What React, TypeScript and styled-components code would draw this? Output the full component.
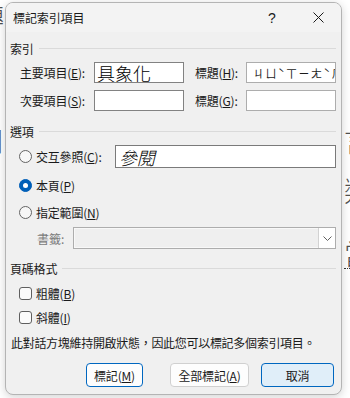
import React from "react";
import styled, { createGlobalStyle } from "styled-components";

const GlobalStyle = createGlobalStyle`
  html, body { margin: 0; padding: 0; background: #fff; }
  body {
    font-family: "Noto Sans CJK TC", "Noto Sans", sans-serif;
    font-size: 12px;
    color: #1a1a1a;
  }
  #root { width: 350px; height: 398px; }
`;

const Page = styled.div`
  position: relative;
  width: 350px;
  height: 398px;
  overflow: hidden;
  background: #fff;
`;

/* document behind the dialog */
const Backdrop = styled.div`
  display: flex;
  flex-direction: column;
  margin: 0 -22px 0 -24px;
`;

const BackRow = styled.div<{ $top: number }>`
  display: flex;
  justify-content: space-between;
  margin-top: ${(p) => p.$top}px;
  height: 30px;
  font-size: 28px;
  line-height: 30px;
  font-weight: 300;
  color: #505050;
`;

const Glyph = styled.span<{ $dotted?: boolean }>`
  display: block;
  width: 28px;
  height: 30px;
  ${(p) => (p.$dotted ? "border-bottom: 1px dotted #333;" : "")}
`;

/* dialog */
const Dialog = styled.div`
  position: absolute;
  left: 5px;
  top: 2px;
  width: 337px;
  height: 393px;
  box-sizing: border-box;
  border: 1px solid #b4b4b4;
  border-radius: 8px;
  background: #f0f0f0;
  box-shadow: 0 2px 10px rgba(0, 0, 0, 0.18);
  overflow: hidden;
  display: flex;
  flex-direction: column;
`;

const TitleBar = styled.div`
  height: 29px;
  display: flex;
  align-items: center;
  background: #f3f3f3;
`;

const Title = styled.div`
  flex: 1;
  padding-left: 7px;
  font-size: 12px;
  letter-spacing: -0.1px;
  color: #1a1a1a;
`;

const TitleButton = styled.div`
  width: 46px;
  height: 29px;
  display: flex;
  align-items: center;
  justify-content: center;
  font-family: "Liberation Sans", sans-serif;
  font-size: 14px;
  color: #1a1a1a;
`;

const Body = styled.div`
  flex: 1;
  display: flex;
  flex-direction: column;
  padding: 0 5px 7px 4px;
`;

const SectionHeader = styled.div<{ $top: number }>`
  display: flex;
  align-items: center;
  gap: 5px;
  height: 16px;
  margin-top: ${(p) => p.$top}px;
  letter-spacing: -0.2px;
  white-space: nowrap;
  &::after {
    content: "";
    flex: 1;
    height: 1px;
    background: #dadada;
  }
`;

const FieldGrid = styled.div`
  display: grid;
  grid-template-columns: 74px 90px 62px 90px;
  grid-auto-rows: 21px;
  row-gap: 7px;
  align-items: center;
  padding-left: 10px;
  margin-top: 6px;
`;

const FieldLabel = styled.span<{ $indent?: number }>`
  white-space: nowrap;
  letter-spacing: -0.2px;
  padding-left: ${(p) => p.$indent ?? 0}px;
`;

const TextBox = styled.div<{ $border: string; $width?: number; $height?: number }>`
  box-sizing: border-box;
  height: ${(p) => p.$height ?? 21}px;
  ${(p) => (p.$width ? `width: ${p.$width}px; margin-left: auto;` : "")}
  border: 1px solid ${(p) => p.$border};
  background: #fff;
  display: flex;
  align-items: center;
  padding-left: 2px;
  overflow: hidden;
  white-space: nowrap;
`;

const BigText = styled.span<{ $italic?: boolean }>`
  font-size: 18px;
  line-height: 20px;
  font-weight: 300;
  color: #000;
  font-style: ${(p) => (p.$italic ? "italic" : "normal")};
  ${(p) => (p.$italic ? "padding-left: 1px;" : "")}
`;

const Phonetic = styled.span`
  font-size: 11px;
  letter-spacing: 1.5px;
  padding-left: 4px;
  color: #1a1a1a;
`;

const OptionRow = styled.div<{ $top: number; $height: number }>`
  display: flex;
  align-items: center;
  gap: 4px;
  height: ${(p) => p.$height}px;
  margin-top: ${(p) => p.$top}px;
  padding-left: 9px;
  white-space: nowrap;
  letter-spacing: -0.2px;
`;

const Radio = styled.span<{ $checked?: boolean }>`
  box-sizing: border-box;
  width: 13px;
  height: 13px;
  border-radius: 50%;
  flex: none;
  display: flex;
  align-items: center;
  justify-content: center;
  border: 1px solid ${(p) => (p.$checked ? "#005fb8" : "#646464")};
  background: ${(p) => (p.$checked ? "#005fb8" : "#f7f7f7")};
  &::after {
    content: "";
    display: ${(p) => (p.$checked ? "block" : "none")};
    width: 5px;
    height: 5px;
    border-radius: 50%;
    background: #fff;
  }
`;

const Checkbox = styled.span`
  box-sizing: border-box;
  width: 13px;
  height: 13px;
  flex: none;
  border: 1px solid #5f5f5f;
  border-radius: 3px;
  background: #fbfbfb;
`;

const BookmarkRow = styled.div`
  display: flex;
  align-items: center;
  height: 22px;
  margin-top: 5px;
  padding-left: 27px;
  color: #7a7a7a;
  white-space: nowrap;
`;

const Select = styled.div`
  box-sizing: border-box;
  width: 263px;
  height: 22px;
  margin-left: auto;
  border: 1px solid #adadad;
  background: #efefef;
  box-shadow: inset 0 0 0 1px #f8f8f8;
  display: flex;
  justify-content: flex-end;
`;

const DropButton = styled.div`
  box-sizing: border-box;
  width: 17px;
  height: 100%;
  background: #fff;
  border-left: 1px solid #d2d2d2;
  display: flex;
  align-items: center;
  justify-content: center;
`;

const Note = styled.div`
  height: 16px;
  line-height: 16px;
  margin-top: 9px;
  padding-left: 1px;
  letter-spacing: -0.3px;
  white-space: nowrap;
`;

const ButtonRow = styled.div`
  display: flex;
  justify-content: flex-end;
  margin-top: 12px;
  padding-right: 2px;
`;

const Button = styled.button<{ $width: number; $gap: number; $variant: "default" | "plain" | "focus" }>`
  box-sizing: border-box;
  width: ${(p) => p.$width}px;
  height: 24px;
  margin-left: ${(p) => p.$gap}px;
  padding: 0;
  border-radius: 4px;
  font-family: inherit;
  font-size: 12px;
  letter-spacing: -0.2px;
  color: #1a1a1a;
  border: 1px solid ${(p) => (p.$variant === "plain" ? "#d0d0d0" : "#0067c0")};
  background: ${(p) => (p.$variant === "focus" ? "#e0eef9" : "#fdfdfd")};
`;

export default function App() {
  return (
    <>
      <GlobalStyle />
      <Page>
        <Backdrop>
          <BackRow $top={2}>
            <Glyph>轉</Glyph>
            <Glyph />
          </BackRow>
          <BackRow $top={93}>
            <Glyph>用</Glyph>
            <Glyph>言</Glyph>
          </BackRow>
          <BackRow $top={20}>
            <Glyph>目</Glyph>
            <Glyph>類</Glyph>
          </BackRow>
          <BackRow $top={33}>
            <Glyph />
            <Glyph $dotted>當</Glyph>
          </BackRow>
        </Backdrop>

        <Dialog>
          <TitleBar>
            <Title>標記索引項目</Title>
            <TitleButton>?</TitleButton>
            <TitleButton>
              <svg width="11" height="11" viewBox="0 0 11 11">
                <path d="M0.5 0.5 L10.5 10.5 M10.5 0.5 L0.5 10.5" stroke="#1a1a1a" strokeWidth="1" />
              </svg>
            </TitleButton>
          </TitleBar>

          <Body>
            <SectionHeader $top={8}>索引</SectionHeader>
            <FieldGrid>
              <FieldLabel>
                主要項目(<u>E</u>):
              </FieldLabel>
              <TextBox $border="#828282">
                <BigText>具象化</BigText>
              </TextBox>
              <FieldLabel $indent={11}>
                標題(<u>H</u>):
              </FieldLabel>
              <TextBox $border="#adadad">
                <Phonetic>ㄐㄩˋㄒㄧㄤˋㄏㄨㄚˋ</Phonetic>
              </TextBox>
              <FieldLabel>
                次要項目(<u>S</u>):
              </FieldLabel>
              <TextBox $border="#828282" />
              <FieldLabel $indent={11}>
                標題(<u>G</u>):
              </FieldLabel>
              <TextBox $border="#adadad" />
            </FieldGrid>

            <SectionHeader $top={12}>選項</SectionHeader>
            <OptionRow $top={6} $height={23}>
              <Radio />
              <span>
                交互參照(<u>C</u>):
              </span>
              <TextBox $border="#7a7a7a" $width={221} $height={23}>
                <BigText $italic>參閱</BigText>
              </TextBox>
            </OptionRow>
            <OptionRow $top={7} $height={20}>
              <Radio $checked />
              <span>
                本頁(<u>P</u>)
              </span>
            </OptionRow>
            <OptionRow $top={7} $height={20}>
              <Radio />
              <span>
                指定範圍(<u>N</u>)
              </span>
            </OptionRow>
            <BookmarkRow>
              <span>書籤:</span>
              <Select>
                <DropButton>
                  <svg width="9" height="5" viewBox="0 0 9 5">
                    <path d="M0.5 0.5 L4.5 4.5 L8.5 0.5" fill="none" stroke="#606060" strokeWidth="1" />
                  </svg>
                </DropButton>
              </Select>
            </BookmarkRow>

            <SectionHeader $top={11}>頁碼格式</SectionHeader>
            <OptionRow $top={8} $height={18}>
              <Checkbox />
              <span>
                粗體(<u>B</u>)
              </span>
            </OptionRow>
            <OptionRow $top={6} $height={18}>
              <Checkbox />
              <span>
                斜體(<u>I</u>)
              </span>
            </OptionRow>

            <Note>此對話方塊維持開啟狀態，因此您可以標記多個索引項目。</Note>

            <ButtonRow>
              <Button $width={57} $gap={0} $variant="default">
                標記(<u>M</u>)
              </Button>
              <Button $width={79} $gap={27} $variant="plain">
                全部標記(<u>A</u>)
              </Button>
              <Button $width={73} $gap={12} $variant="focus">
                取消
              </Button>
            </ButtonRow>
          </Body>
        </Dialog>
      </Page>
    </>
  );
}
